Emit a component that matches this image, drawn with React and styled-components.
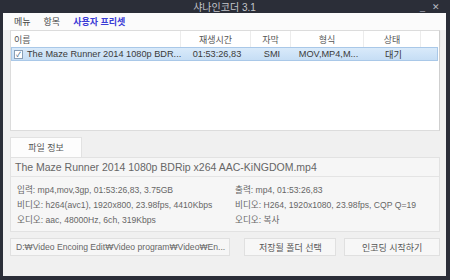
import styled, { createGlobalStyle } from "styled-components";

const GlobalStyle = createGlobalStyle`
  html, body {
    margin: 0;
    padding: 0;
    background: #2b2e38;
  }
  * {
    box-sizing: border-box;
  }
`;

const FONT = `"Liberation Sans", "Noto Sans CJK KR", sans-serif`;

const Window = styled.div`
  width: 450px;
  height: 280px;
  background: #2b2e38;
  padding: 0 4px 4px 3px;
  display: flex;
  flex-direction: column;
  font-family: ${FONT};
  font-size: 9px;
  color: #555;
`;

const TitleBar = styled.div`
  height: 13px;
  display: flex;
  align-items: center;
  justify-content: center;
  position: relative;
  color: #c4c6cc;
  font-size: 10px;
`;

const WinButtons = styled.div`
  position: absolute;
  right: 6px;
  top: 0;
  height: 13px;
  display: flex;
  gap: 7px;
  align-items: center;
  color: #b8bbc3;
  font-size: 9px;
`;

const Body = styled.div`
  flex: 1;
  background: #f0f0f0;
  display: flex;
  flex-direction: column;
`;

const MenuBar = styled.div`
  height: 17px;
  background: #fbfbfb;
  display: flex;
  align-items: center;
  gap: 13px;
  padding-left: 11px;
  font-size: 9px;
  color: #444;
`;

const MenuItem = styled.span`
  color: ${(p) => (p.active ? "#3b3bd6" : "#444")};
  font-weight: ${(p) => (p.active ? "bold" : "normal")};
`;

const Content = styled.div`
  flex: 1;
  padding: 0 4px 0 7px;
  display: flex;
  flex-direction: column;
`;

const Table = styled.div`
  height: 101px;
  background: #fff;
  border: 1px solid #dcdcdc;
  border-right: 1px solid #cfcfcf;
  margin-right: 2px;
`;

const Cols = "170px 70px 40px 73px 57px 20px";

const HeaderRow = styled.div`
  display: grid;
  grid-template-columns: ${Cols};
  height: 16px;
  align-items: stretch;
`;

const HeaderCell = styled.div`
  display: flex;
  align-items: center;
  justify-content: ${(p) => (p.left ? "flex-start" : "center")};
  padding-left: ${(p) => (p.left ? "3px" : "0")};
  border-right: 1px solid #ececec;
  color: #555;
  font-size: 9px;
`;

const DataRow = styled.div`
  display: grid;
  grid-template-columns: ${Cols};
  height: 14px;
  background: linear-gradient(#d9eafa, #c6def5);
  border: 1px solid #a9c8e8;
  margin-right: 1px;
  align-items: center;
  color: #3a3a3a;
  font-size: 9.2px;
`;

const DataCell = styled.div`
  display: flex;
  align-items: center;
  justify-content: ${(p) => (p.left ? "flex-start" : "center")};
  white-space: nowrap;
  overflow: hidden;
  gap: 4px;
  padding-left: ${(p) => (p.left ? "2px" : "0")};
`;

const Check = styled.span`
  width: 9px;
  height: 9px;
  flex: none;
  border: 1px solid #8a9fb6;
  background: #fff;
  font-size: 7px;
  line-height: 7px;
  text-align: center;
  color: #3a5a80;
`;

const TabRow = styled.div`
  margin-top: 6px;
  display: flex;
`;

const Tab = styled.div`
  width: 72px;
  height: 20px;
  background: #fdfdfd;
  border: 1px solid #e2e2e2;
  border-bottom: none;
  display: flex;
  align-items: center;
  justify-content: center;
  color: #555;
  font-size: 9px;
`;

const Panel = styled.div`
  border: 1px solid #e2e2e2;
  margin-right: 2px;
  background: #f6f6f6;
`;

const FileName = styled.div`
  height: 19px;
  display: flex;
  align-items: center;
  padding-left: 4px;
  border-bottom: 1px solid #e4e4e4;
  font-size: 10.5px;
  color: #666;
`;

const InfoGrid = styled.div`
  display: grid;
  grid-template-columns: 218px 1fr;
  padding: 7px 6px 4px 6px;
  row-gap: 2px;
  font-size: 8.6px;
  color: #666;
`;

const InfoLine = styled.div`
  height: 13px;
  line-height: 13px;
  white-space: nowrap;
`;

const Bottom = styled.div`
  display: flex;
  align-items: center;
  gap: 8px;
  padding-top: 6px;
  margin-right: 2px;
`;

const PathBox = styled.div`
  width: 221px;
  height: 18px;
  border: 1px solid #e0e0e0;
  background: #f6f6f6;
  display: flex;
  align-items: center;
  padding-left: 5px;
  white-space: nowrap;
  overflow: hidden;
  color: #666;
  font-size: 8.6px;
`;

const Button = styled.div`
  width: ${(p) => p.w}px;
  height: 18px;
  border: 1px solid #e0e0e0;
  background: #f7f7f7;
  display: flex;
  align-items: center;
  justify-content: center;
  color: #555;
  font-size: 9px;
  margin-left: ${(p) => p.ml || 0}px;
`;

export default function App() {
  return (
    <>
      <GlobalStyle />
      <Window>
        <TitleBar>
          샤나인코더 3.1
          <WinButtons>
            <span>_</span>
            <span>✕</span>
          </WinButtons>
        </TitleBar>
        <Body>
          <MenuBar>
            <MenuItem>메뉴</MenuItem>
            <MenuItem>항목</MenuItem>
            <MenuItem active>사용자 프리셋</MenuItem>
          </MenuBar>
          <Content>
            <Table>
              <HeaderRow>
                <HeaderCell left>이름</HeaderCell>
                <HeaderCell>재생시간</HeaderCell>
                <HeaderCell>자막</HeaderCell>
                <HeaderCell>형식</HeaderCell>
                <HeaderCell>상태</HeaderCell>
                <HeaderCell />
              </HeaderRow>
              <DataRow>
                <DataCell left>
                  <Check>✓</Check>
                  The Maze Runner 2014 1080p BDR...
                </DataCell>
                <DataCell>01:53:26,83</DataCell>
                <DataCell>SMI</DataCell>
                <DataCell>MOV,MP4,M...</DataCell>
                <DataCell>대기</DataCell>
                <DataCell />
              </DataRow>
            </Table>
            <TabRow>
              <Tab>파일 정보</Tab>
            </TabRow>
            <Panel>
              <FileName>The Maze Runner 2014 1080p BDRip x264 AAC-KiNGDOM.mp4</FileName>
              <InfoGrid>
                <InfoLine>입력: mp4,mov,3gp, 01:53:26,83, 3.75GB</InfoLine>
                <InfoLine>출력: mp4, 01:53:26,83</InfoLine>
                <InfoLine>비디오: h264(avc1), 1920x800, 23.98fps, 4410Kbps</InfoLine>
                <InfoLine>비디오: H264, 1920x1080, 23.98fps, CQP Q=19</InfoLine>
                <InfoLine>오디오: aac, 48000Hz, 6ch, 319Kbps</InfoLine>
                <InfoLine>오디오: 복사</InfoLine>
              </InfoGrid>
            </Panel>
            <Bottom>
              <PathBox>D:₩Video Encoing Edit₩Video program₩Video₩En...</PathBox>
              <Button w={92} ml={6}>저장될 폴더 선택</Button>
              <Button w={96}>인코딩 시작하기</Button>
            </Bottom>
          </Content>
        </Body>
      </Window>
    </>
  );
}
